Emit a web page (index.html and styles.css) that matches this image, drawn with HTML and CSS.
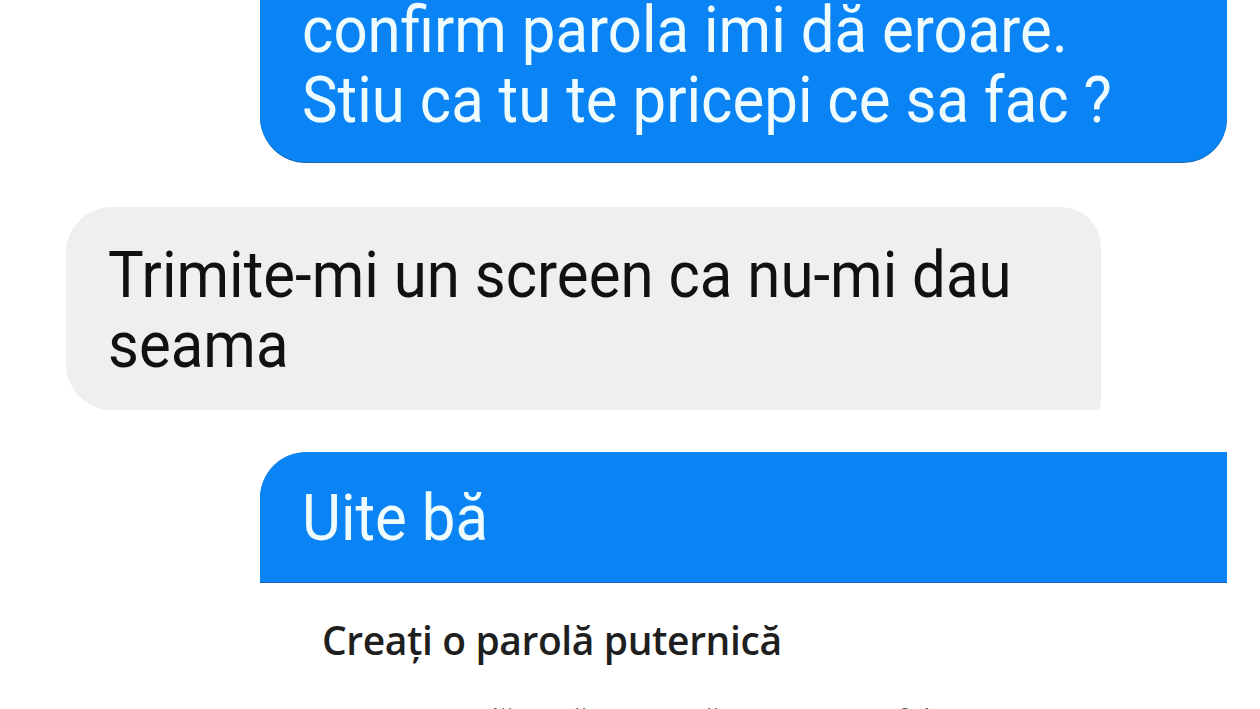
FILE: index.html
```html
<!DOCTYPE html>
<html lang="ro">
<head>
<meta charset="utf-8">
<title>Conversație</title>
<link rel="stylesheet" href="styles.css">
</head>
<body>
<main class="chat">
  <div class="bubble out first">
    <p>confirm parola imi dă eroare.</p>
    <p>Stiu ca tu te pricepi ce sa fac ?</p>
  </div>
  <div class="bubble in">
    <p>Trimite-mi un screen ca nu-mi dau</p>
    <p>seama</p>
  </div>
  <div class="bubble out second">
    <p>Uite bă</p>
  </div>
  <section class="shot">
    <h2 class="shot-title">Creați o parolă puternică</h2>
    <p class="shot-text">Creați o parolă nouă puternică pe care nu o folosiți</p>
  </section>
</main>
</body>
</html>
```

FILE: styles.css
```css
* { box-sizing: border-box; }
html, body {
  margin: 0;
  padding: 0;
  background: #ffffff;
  width: 1260px;
  height: 709px;
  overflow: hidden;
}
.chat {
  display: flex;
  flex-direction: column;
  align-items: flex-start;
  font-family: Roboto, "Noto Sans", sans-serif;
}
.bubble p {
  margin: 0;
  font-size: 64px;
  line-height: 70px;
  white-space: nowrap;
  transform: scaleX(0.937);
  transform-origin: left center;
}
.bubble.out {
  background: #0a84f5;
  color: #effcff;
  margin-left: 260px;
  width: 967px;
  padding-left: 42px;
}
.bubble.first {
  margin-top: -4px;
  padding-bottom: 26px;
  border-radius: 0 0 44px 46px;
  box-shadow: 0 1px 0 #1466b5;
}
.bubble.in {
  background: #efefef;
  color: #111111;
  margin-top: 45px;
  margin-left: 66px;
  width: 1035px;
  padding: 34px 0 29px 42px;
  border-radius: 46px 40px 6px 46px;
}
.bubble.second {
  margin-top: 42px;
  padding-top: 32px;
  padding-bottom: 28px;
  border-radius: 46px 0 0 0;
  box-shadow: 0 1px 0 #1466b5;
}
.shot {
  margin-left: 322px;
  margin-top: 34px;
}
.shot-title {
  margin: 0;
  font-family: "Open Sans", Lato, sans-serif;
  font-weight: 600;
  font-size: 39px;
  line-height: 48px;
  letter-spacing: -0.4px;
  color: #1f1f1f;
}
.shot-text {
  margin: 36px 0 0;
  font-family: "Open Sans", Lato, sans-serif;
  font-size: 28px;
  line-height: 36px;
  color: #555555;
  white-space: nowrap;
}
```
